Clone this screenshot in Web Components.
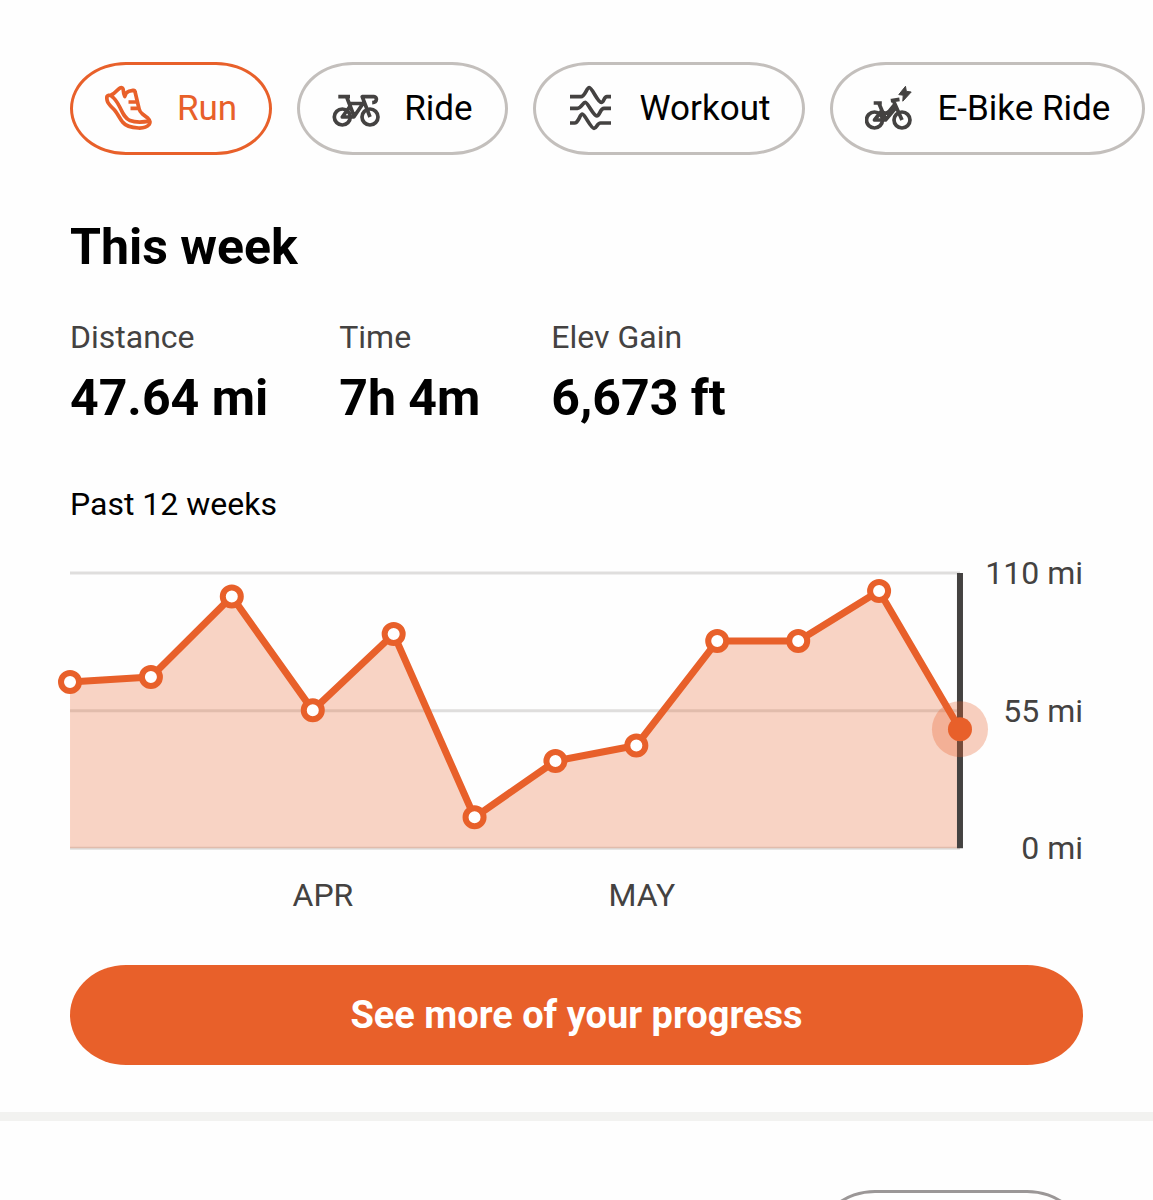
<!DOCTYPE html>
<html lang="en">
<head>
<meta charset="utf-8">
<meta name="viewport" content="width=device-width, initial-scale=1">
<title>Progress</title>
<style>
  body {
    margin: 0;
    background: #fefefe;
    color: #000;
    font-family: Roboto, "Liberation Sans", sans-serif;
    --accent: #e8602a;
    --muted: #444241;
    --outline: #c3bfbc;
  }
</style>
</head>
<body>
<progress-page></progress-page>

<script>
const ICONS = {
  run: `
    <path d="M1.8 12.5C1.8 10.5 3.5 10.3 5.5 10.2C9.5 9.8 11.5 4.8 15.2 2.8C16.8 2 18.2 3.4 18.3 5C18.4 7 18.4 8.5 19.8 11.5C20.4 8.6 21.5 7 24 6.2L28 5.4C29.3 5.2 29.9 6 30.1 7L34 23.5C34.5 26 35.6 27.5 37.5 29L43 33.3C45.2 35.2 45.4 37.5 44 39.6C41.5 42.6 38 43.2 33.5 43C27.5 42.8 21.5 42 17.5 37C14.5 33 12.5 28.5 9.5 25C6.5 21.8 3.5 19.5 2.5 16.5C2 15.2 1.8 14 1.8 12.5Z"/>
    <path d="M6 11C10.5 13.5 12.8 18 15 22.5C17.6 28 20 33.5 25 35.5C30.5 37.7 38 37.2 44.5 36.2"/>
    <path d="M23.5 17H32M25.5 23.3H33.5"/>`,
  ride: `
    <circle cx="10.3" cy="32" r="8"/>
    <circle cx="38" cy="32" r="8"/>
    <path d="M6.3 11.7H18M14.7 12L22 31M16.8 18.5H31L21.8 32H10.3L18.2 21M38 32L30.2 11.7H42C45.3 11.7 45.6 17.5 40.2 17.7"/>`,
  workout: `
    <path d="M2 11.7H13C17 11.7 18.5 2.7 21.3 2.7S29.8 17.4 33.3 17.4C36 17.4 35.8 11.7 39 11.7H43"/>
    <path d="M2 23.3H9.5C13.3 23.3 14.8 17.4 17.3 17.4S25.2 30.8 28.7 30.8C32 30.8 32 23.3 36 23.3H43"/>
    <path d="M2 38H6.5C10.7 38 11.7 29.2 14.3 29.2S22.7 43.3 26 43.3C29 43.3 29 38 32.5 38H43"/>`,
  ebike: `
    <circle cx="9.5" cy="35" r="8"/>
    <circle cx="37" cy="35" r="8"/>
    <path d="M8.7 18H16.8M14 18.5L20.5 34M16.6 26L9.5 35H20.5L31 22.5M16.5 25.5C19 29 22.2 29 24.5 26L29.8 19.5M37 35L28.2 15.3L34.5 14.4M25.8 15.7L29 15.3"/>
    <path class="solid" d="M40.5 1.3L33.8 9.6L38.2 10.2L37.8 16.2L46.2 7L41.3 6.3Z"/>`
};

class SportChip extends HTMLElement {
  constructor() {
    super();
    this.attachShadow({ mode: 'open' });
  }

  connectedCallback() {
    this.shadowRoot.innerHTML = `
      <style>
        :host { display: block; flex: none; }
        button {
          display: flex;
          align-items: center;
          gap: 24px;
          height: 93px;
          padding: 0 32px;
          border: 3px solid var(--outline);
          border-radius: 56px / 50%;
          background: none;
          color: inherit;
          font: inherit;
          font-size: 35px;
          line-height: 44px;
          white-space: nowrap;
          cursor: pointer;
        }
        :host([selected]) button {
          border-color: var(--accent);
          color: var(--accent);
        }
        svg {
          width: 48px;
          height: 48px;
          flex: none;
          fill: none;
          stroke: var(--muted);
          stroke-width: 3.7;
          stroke-linejoin: round;
        }
        :host([selected]) svg { stroke: var(--accent); }
        .solid { fill: var(--muted); stroke-width: 1; }
      </style>
      <button type="button" aria-pressed="${this.hasAttribute('selected')}">
        <svg viewBox="0 0 48 48" aria-hidden="true">${ICONS[this.getAttribute('icon')]}</svg>
        <slot></slot>
      </button>
    `;
  }
}

customElements.define('sport-chip', SportChip);

const statTemplate = document.createElement('template');
statTemplate.innerHTML = `
  <style>
    :host { display: block; }
    .label {
      color: var(--muted);
      font-size: 32px;
      line-height: 40px;
    }
    .value {
      margin-top: 13px;
      font-size: 50px;
      font-weight: 700;
      line-height: 56px;
    }
  </style>
  <div class="label"><slot name="label"></slot></div>
  <div class="value"><slot></slot></div>
`;

class StatItem extends HTMLElement {
  constructor() {
    super();
    this.attachShadow({ mode: 'open' }).appendChild(
      statTemplate.content.cloneNode(true)
    );
  }
}

customElements.define('stat-item', StatItem);

class WeeksChart extends HTMLElement {
  constructor() {
    super();
    this.attachShadow({ mode: 'open' });
  }

  connectedCallback() {
    this.render();
  }

  get values() {
    return this.getAttribute('values').split(',').map(Number);
  }

  get max() {
    return Number(this.getAttribute('max'));
  }

  render() {
    const width = 889;
    const height = 275;
    const step = width / (this.values.length - 1);
    const points = this.values.map((v, i) => [
      (i * step).toFixed(1),
      (height - (v / this.max) * height).toFixed(1)
    ]);
    const line = points.map((p) => p.join(' ')).join(' L');
    const last = points[points.length - 1];
    const dots = points
      .slice(0, -1)
      .map(([x, y]) => `<circle class="dot" cx="${x}" cy="${y}" r="9"/>`)
      .join('');

    this.shadowRoot.innerHTML = `
      <style>
        :host {
          display: grid;
          grid-template-columns: minmax(0, 1fr) 123px;
          row-gap: 27px;
          color: var(--muted);
          font-size: 32px;
          line-height: 40px;
        }
        svg {
          display: block;
          width: 100%;
          height: auto;
          overflow: visible;
        }
        .grid { stroke: #dfdedd; stroke-width: 3; }
        .area { fill: var(--accent); fill-opacity: .27; }
        .now { stroke: var(--muted); stroke-width: 6; }
        .line {
          fill: none;
          stroke: var(--accent);
          stroke-width: 7;
          stroke-linejoin: round;
        }
        .dot { fill: #fff; stroke: var(--accent); stroke-width: 6; }
        .halo { fill: var(--accent); fill-opacity: .3; }
        .current { fill: var(--accent); }
        .scale {
          display: flex;
          flex-direction: column;
          justify-content: space-between;
          margin: -20px 0;
          text-align: right;
        }
        .months {
          display: grid;
          grid-template-columns: 25% 35.5% 1fr;
        }
        .months :first-child { grid-column: 2; }
      </style>
      <svg viewBox="0 0 ${width} ${height}" role="img" aria-label="Weekly distance">
        <path class="grid" d="M0 0H${width}M0 ${height / 2}H${width}M0 ${height}H${width}"/>
        <path class="area" d="M${line} V${height} H0 Z"/>
        <path class="now" d="M${width} 0V${height}"/>
        <circle class="halo" cx="${last[0]}" cy="${last[1]}" r="28"/>
        <path class="line" d="M${line}"/>
        ${dots}
        <circle class="current" cx="${last[0]}" cy="${last[1]}" r="12"/>
      </svg>
      <div class="scale">
        <span>${this.max} mi</span>
        <span>${this.max / 2} mi</span>
        <span>0 mi</span>
      </div>
      <div class="months"><span>APR</span><span>MAY</span></div>
    `;
  }
}

customElements.define('weeks-chart', WeeksChart);

const pageTemplate = document.createElement('template');
pageTemplate.innerHTML = `
  <style>
    :host {
      display: flex;
      flex-direction: column;
      height: 100vh;
      overflow: hidden;
    }
    main { flex: none; padding: 62px 70px 47px; }
    nav { display: flex; gap: 25px; }
    h1 {
      margin: 64px 0 42px;
      font-size: 50px;
      line-height: 56px;
    }
    .stats { display: flex; gap: 71px; }
    h2 {
      margin: 58px 0 49px;
      font-size: 32px;
      font-weight: 400;
      line-height: 40px;
    }
    .more {
      display: block;
      width: 100%;
      height: 100px;
      margin-top: 50px;
      border: 0;
      border-radius: 56px / 50%;
      background: var(--accent);
      color: #fff;
      font: inherit;
      font-size: 38px;
      font-weight: 700;
      cursor: pointer;
    }
    .next {
      flex: 1;
      min-height: 0;
      padding: 69px 70px 0;
      border-top: 9px solid #f2f2f0;
      overflow: hidden;
    }
    .next button {
      display: block;
      width: 264px;
      height: 93px;
      margin-left: auto;
      border: 3px solid #9b9797;
      border-radius: 56px / 50%;
      background: none;
    }
  </style>
  <main>
    <nav aria-label="Sports">
      <sport-chip icon="run" selected>Run</sport-chip>
      <sport-chip icon="ride">Ride</sport-chip>
      <sport-chip icon="workout">Workout</sport-chip>
      <sport-chip icon="ebike">E-Bike Ride</sport-chip>
    </nav>
    <h1>This week</h1>
    <div class="stats">
      <stat-item><span slot="label">Distance</span>47.64 mi</stat-item>
      <stat-item><span slot="label">Time</span>7h 4m</stat-item>
      <stat-item><span slot="label">Elev Gain</span>6,673 ft</stat-item>
    </div>
    <h2>Past 12 weeks</h2>
    <weeks-chart max="110" values="66.5,68.5,100.6,55.1,85.6,12.4,34.9,41.1,82.8,82.8,102.8,47.6"></weeks-chart>
    <button class="more" type="button">See more of your progress</button>
  </main>
  <section class="next">
    <button type="button" aria-label="Open"></button>
  </section>
`;

class ProgressPage extends HTMLElement {
  constructor() {
    super();
    this.attachShadow({ mode: 'open' }).appendChild(
      pageTemplate.content.cloneNode(true)
    );
  }
}

customElements.define('progress-page', ProgressPage);
</script>
</body>
</html>
